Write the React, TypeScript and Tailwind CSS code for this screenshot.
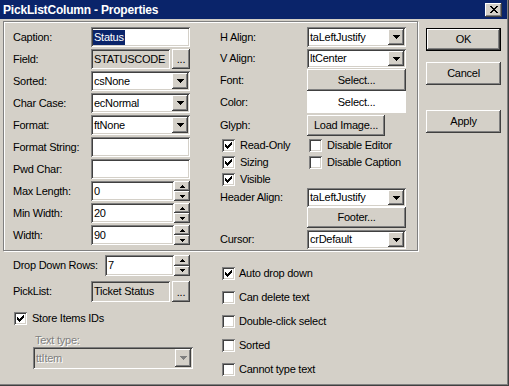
import React from "react";

const sunken =
  "shadow-[inset_1px_1px_0_#808080,inset_-1px_-1px_0_#ffffff,inset_2px_2px_0_#404040,inset_-2px_-2px_0_#d4d0c8]";
const raised =
  "shadow-[inset_-1px_-1px_0_#404040,inset_1px_1px_0_#ffffff,inset_-2px_-2px_0_#808080,inset_2px_2px_0_#d4d0c8]";
const grayText = "text-[#808080] [text-shadow:1px_1px_0_#ffffff]";

function DownArrow({ color = "#000000" }: { color?: string }) {
  return (
    <svg width="7" height="4" viewBox="0 0 7 4" shapeRendering="crispEdges">
      <path d="M0 0h7v1H0zM1 1h5v1H1zM2 2h3v1H2zM3 3h1v1H3z" fill={color} />
    </svg>
  );
}

function SmallArrow({ up }: { up?: boolean }) {
  return (
    <svg width="5" height="3" viewBox="0 0 5 3" shapeRendering="crispEdges">
      <path
        d={up ? "M2 0h1v1H2zM1 1h3v1H1zM0 2h5v1H0z" : "M0 0h5v1H0zM1 1h3v1H1zM2 2h1v1H2z"}
        fill="#000000"
      />
    </svg>
  );
}

function CheckMark() {
  const ys = [2, 3, 4, 3, 2, 1, 0];
  return (
    <svg width="7" height="7" viewBox="0 0 7 7" shapeRendering="crispEdges">
      {ys.map((y, i) => (
        <rect key={i} x={i} y={y} width="1" height="3" fill="#000000" />
      ))}
    </svg>
  );
}

function Edit({
  children,
  className = "",
  gray = false,
}: {
  children?: React.ReactNode;
  className?: string;
  gray?: boolean;
}) {
  return (
    <div
      className={`${sunken} ${gray ? "bg-[#d4d0c8]" : "bg-white"} flex items-center pl-[3px] overflow-hidden whitespace-nowrap ${className}`}
    >
      {children}
    </div>
  );
}

function Combo({
  value,
  className = "",
  disabled = false,
}: {
  value: string;
  className?: string;
  disabled?: boolean;
}) {
  return (
    <div className={`${sunken} ${disabled ? "bg-[#d4d0c8]" : "bg-white"} flex p-[2px] ${className}`}>
      <span className={`flex-1 flex items-center pl-[1px] ${disabled ? grayText : ""}`}>{value}</span>
      <div className={`${raised} bg-[#d4d0c8] w-[16px] flex items-center justify-center`}>
        <DownArrow color={disabled ? "#808080" : "#000000"} />
      </div>
    </div>
  );
}

function Spin() {
  return (
    <div className="w-[16px] h-full flex flex-col">
      <div className={`${raised} bg-[#d4d0c8] flex-1 flex items-center justify-center`}>
        <SmallArrow up />
      </div>
      <div className={`${raised} bg-[#d4d0c8] flex-1 flex items-center justify-center`}>
        <SmallArrow />
      </div>
    </div>
  );
}

function Btn({ children, className = "" }: { children: React.ReactNode; className?: string }) {
  return (
    <div className={`${raised} bg-[#d4d0c8] flex items-center justify-center ${className}`}>
      <span>{children}</span>
    </div>
  );
}

function Check({
  checked = false,
  children,
  className = "",
  gap = "ml-[5px]",
}: {
  checked?: boolean;
  children: React.ReactNode;
  className?: string;
  gap?: string;
}) {
  return (
    <div className={`flex items-center ${className}`}>
      <div className={`${sunken} bg-white w-[13px] h-[13px] flex items-center justify-center shrink-0`}>
        {checked && <CheckMark />}
      </div>
      <span className={gap}>{children}</span>
    </div>
  );
}

function Row({ label, children }: { label: string; children: React.ReactNode }) {
  return (
    <div className="h-[22px] flex items-center">
      <span className="w-[78px]">{label}</span>
      <div className="w-[99px] h-[20px] flex">{children}</div>
    </div>
  );
}

export default function App() {
  return (
    <div className="font-['Liberation_Sans',Arial,sans-serif] text-[11px] leading-none tracking-[-0.25px] text-black relative w-[509px] h-[386px] bg-[#d4d0c8] overflow-hidden shadow-[inset_-1px_-1px_0_#404040,inset_-2px_-2px_0_#808080]">
      {/* Title bar */}
      <div className="h-[19px] bg-[#0a246a] flex items-center pl-[3px] pr-[5px] mr-[2px]">
        <span className="text-white font-bold text-[12px] tracking-[-0.2px]">PickListColumn - Properties</span>
        <div className={`${raised} bg-[#d4d0c8] ml-auto w-[17px] h-[14px] flex items-center justify-center`}>
          <svg width="8" height="7" viewBox="0 0 8 7" shapeRendering="crispEdges">
            <path
              d="M0 0h2v1H0zM6 0h2v1H6zM1 1h2v1H1zM5 1h2v1H5zM2 2h4v1H2zM3 3h2v1H3zM2 4h4v1H2zM1 5h2v1H1zM5 5h2v1H5zM0 6h2v1H0zM6 6h2v1H6z"
              fill="#000000"
            />
          </svg>
        </div>
      </div>

      <div className="flex mt-[2px]">
        {/* Properties frame */}
        <div className="ml-[3px] w-[415px] h-[230px] border border-[#808080] shadow-[inset_1px_1px_0_#ffffff,1px_1px_0_#ffffff]">
          <div className="flex pl-[9px] pt-[4px]">
            <div className="w-[177px] flex flex-col">
              <Row label="Caption:">
                <Edit className="w-full">
                  <span className="bg-[#0a246a] text-white px-[1px] py-[2px] -ml-[1px]">Status</span>
                </Edit>
              </Row>
              <Row label="Field:">
                <Edit gray className="w-[79px]">
                  <span>STATUSCODE</span>
                </Edit>
                <Btn className="ml-[2px] w-[18px] items-end pb-[4px]">...</Btn>
              </Row>
              <Row label="Sorted:">
                <Combo value="csNone" className="w-full" />
              </Row>
              <Row label="Char Case:">
                <Combo value="ecNormal" className="w-full" />
              </Row>
              <Row label="Format:">
                <Combo value="ftNone" className="w-full" />
              </Row>
              <Row label="Format String:">
                <Edit className="w-full" />
              </Row>
              <Row label="Pwd Char:">
                <Edit className="w-full" />
              </Row>
              <Row label="Max Length:">
                <Edit className="w-[83px]">
                  <span>0</span>
                </Edit>
                <Spin />
              </Row>
              <Row label="Min Width:">
                <Edit className="w-[83px]">
                  <span>20</span>
                </Edit>
                <Spin />
              </Row>
              <Row label="Width:">
                <Edit className="w-[83px]">
                  <span>90</span>
                </Edit>
                <Spin />
              </Row>
            </div>

            <div className="ml-[30px] w-[186px] flex flex-col">
              <div className="h-[22px] flex items-center">
                <span className="w-[87px]">H Align:</span>
                <Combo value="taLeftJustify" className="w-[99px] h-[20px]" />
              </div>
              <div className="h-[21px] flex items-center">
                <span className="w-[87px]">V Align:</span>
                <Combo value="ltCenter" className="w-[99px] h-[19px]" />
              </div>
              <div className="h-[22px] flex items-center">
                <span className="w-[87px]">Font:</span>
                <Btn className="w-[99px] h-[22px]">Select...</Btn>
              </div>
              <div className="h-[22px] flex items-center">
                <span className="w-[87px]">Color:</span>
                <div className="w-[99px] h-[22px] bg-white flex items-center justify-center">
                  <span>Select...</span>
                </div>
              </div>
              <div className="h-[21px] mt-[2px] flex items-center">
                <span className="w-[87px]">Glyph:</span>
                <Btn className="w-[78px] h-[21px]">Load Image...</Btn>
              </div>
              <div className="h-[17px] mt-[1px] flex items-center">
                <Check checked className="w-[87px] pl-[2px]">
                  Read-Only
                </Check>
                <Check className="pl-[2px]">Disable Editor</Check>
              </div>
              <div className="h-[17px] flex items-center">
                <Check checked className="w-[87px] pl-[2px]">
                  Sizing
                </Check>
                <Check className="pl-[2px]">Disable Caption</Check>
              </div>
              <div className="h-[17px] flex items-center">
                <Check checked className="w-[87px] pl-[2px]">
                  Visible
                </Check>
              </div>
              <div className="h-[19px] flex items-center">
                <span className="w-[87px]">Header Align:</span>
                <Combo value="taLeftJustify" className="w-[99px] h-[19px]" />
              </div>
              <div className="h-[21px] flex items-center">
                <span className="w-[87px]" />
                <Btn className="w-[99px] h-[21px]">Footer...</Btn>
              </div>
              <div className="h-[19px] mt-[2px] flex items-center">
                <span className="w-[87px]">Cursor:</span>
                <Combo value="crDefault" className="w-[99px] h-[19px]" />
              </div>
            </div>
          </div>
        </div>

        {/* Dialog buttons */}
        <div className="ml-[8px] flex flex-col">
          <div className="mt-[7px] w-[75px] h-[23px] border border-black">
            <Btn className="w-full h-full">OK</Btn>
          </div>
          <Btn className="mt-[11px] w-[75px] h-[23px]">Cancel</Btn>
          <Btn className="mt-[25px] w-[75px] h-[23px]">Apply</Btn>
        </div>
      </div>

      {/* Lower section */}
      <div className="flex">
        <div className="pl-[13px] w-[193px] flex flex-col">
          <div className="mt-[4px] h-[21px] flex items-center">
            <span className="w-[92px]">Drop Down Rows:</span>
            <Edit className="w-[69px] h-full">
              <span>7</span>
            </Edit>
            <Spin />
          </div>
          <div className="mt-[5px] h-[21px] flex items-center">
            <span className="w-[78px]">PickList:</span>
            <Edit gray className="w-[79px] h-full">
              <span>Ticket Status</span>
            </Edit>
            <Btn className="ml-[2px] w-[18px] h-full items-end pb-[4px]">...</Btn>
          </div>
          <Check checked className="mt-[10px] h-[13px] pl-[1px]">
            Store Items IDs
          </Check>
          <div className="mt-[9px] h-[13px] pl-[22px] flex items-center">
            <span className={grayText}>Text type:</span>
          </div>
          <Combo value="ttItem" disabled className="ml-[20px] w-[160px] h-[22px]" />
        </div>

        <div className="ml-[29px] mt-[10px] flex flex-col">
          {[
            ["Auto drop down", true],
            ["Can delete text", false],
            ["Double-click select", false],
            ["Sorted", false],
            ["Cannot type text", false],
          ].map(([label, checked]) => (
            <Check key={label as string} checked={checked as boolean} gap="ml-[4px]" className="h-[24px]">
              {label as string}
            </Check>
          ))}
        </div>
      </div>
    </div>
  );
}
